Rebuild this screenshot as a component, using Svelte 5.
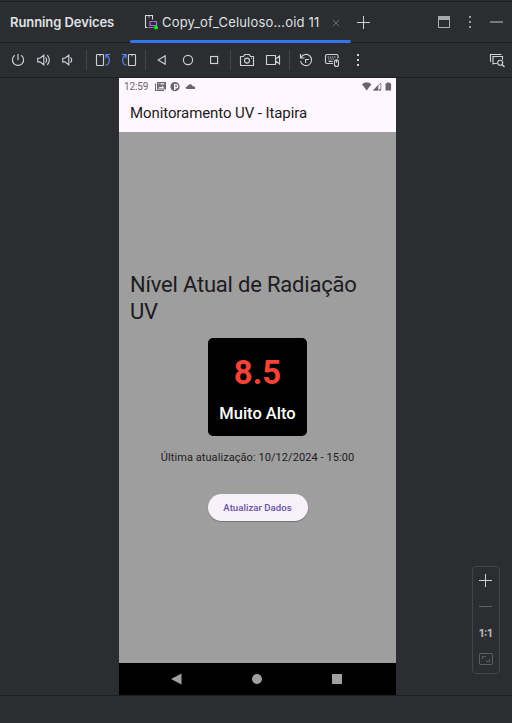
<script>
  const groups = [
    ['power', 'volumeUp', 'volumeDown'],
    ['rotateLeft', 'rotateRight'],
    ['back', 'home', 'overview'],
    ['camera', 'video'],
    ['reset', 'keyboard', 'more'],
  ];
</script>

{#snippet icon(name)}
  <svg class="icon" width="20" height="20" viewBox="0 0 20 20" fill="none" stroke="currentColor" stroke-width="1.15">
    {#if name === 'power'}
      <path d="M10 4v6.2M6.8 5.2A5.6 5.6 0 1 0 13.2 5.2" />
    {:else if name === 'volumeUp'}
      <path d="M3.7 8.2h2.1L9.8 5.2v9.6l-4-3H3.7zM11.5 7.4q2.3 2.6 0 5.2M13.3 5.2q4 4.8 0 9.6" />
    {:else if name === 'volumeDown'}
      <path d="M3.7 8.2h2.1L9.8 5.2v9.6l-4-3H3.7zM11.5 7.4q2.3 2.6 0 5.2" />
    {:else if name === 'rotateLeft'}
      <rect x="3.5" y="4.5" width="7" height="11" rx=".7" />
      <path d="M6.3 5.7h1.4" />
      <path class="blue" d="M12.5 15.3c4.8-1.4 5-7.5 1-10.3M17 4.5H12.9v4" />
    {:else if name === 'rotateRight'}
      <rect x="9.5" y="4.5" width="7" height="11" rx=".7" />
      <path d="M12.3 5.7h1.4" />
      <path class="blue" d="M7.5 15.3c-4.8-1.4-5-7.5-1-10.3M3 4.5H7.1v4" />
    {:else if name === 'back'}
      <path d="M13.2 5.8v8.4L6.2 10z" />
    {:else if name === 'home'}
      <circle cx="10" cy="10" r="4.6" />
    {:else if name === 'overview'}
      <rect x="6.6" y="6.5" width="7" height="7" />
    {:else if name === 'camera'}
      <path d="M3.5 6.5h3l1.2-2h4.6l1.2 2h3v9h-13z" stroke-linejoin="round" />
      <circle cx="10" cy="10.6" r="2.5" /><path d="M14 8.2h1.2" />
    {:else if name === 'video'}
      <path d="M3.5 5.5h9v9h-9zM12.5 9.2l4-3.3v8.2l-4-3.3" />
    {:else if name === 'reset'}
      <path d="M5 7.5a5.6 5.6 0 1 1-.5 3.5M4.5 4v4h4M9.6 13V9.5h3.6" />
    {:else if name === 'keyboard'}
      <path d="M11 13.5H5A1.5 1.5 0 0 1 3.5 12V6A1.5 1.5 0 0 1 5 4.5h9.5A1.5 1.5 0 0 1 16 6v2.5" />
      <path d="M5.7 7h8.2M6.3 9h6" stroke-dasharray="1.2 1" />
      <path d="M6.5 11.3h4.2M12.5 11.8a2 2 0 0 1 4 0v2.7a2 2 0 0 1-4 0zM14.5 10.5v2.2" />
    {:else if name === 'more'}
      <g fill="currentColor" stroke="none"><rect x="9" y="4" width="2" height="2" /><rect x="9" y="9" width="2" height="2" /><rect x="9" y="14" width="2" height="2" /></g>
    {:else if name === 'inspect'}
      <path d="M3.5 12V4.5h11M6 14.5V6.5h9.5v3.2M6 13.5h4" />
      <circle cx="13.2" cy="12.7" r="2.5" /><path d="M15 14.5l2.5 2.5" stroke-width="1.4" />
    {/if}
  </svg>
{/snippet}

<div class="ide">
  <header>
    <h1>Running Devices</h1>
    <div class="tab">
      <svg width="15" height="16" viewBox="0 0 15 16" fill="none">
        <path d="M3.5 13.5h-2v-12h7v4M4.3 3h1.4" stroke="#d5d7dc" stroke-width="1.1" />
        <path d="M6 7.5h6.5v4H6zM4.5 13.5h5" stroke="#a76ddb" stroke-width="1.2" />
        <circle cx="12" cy="13.5" r="2" fill="#00f51c" />
      </svg>
      <span>Copy_of_Celuloso...oid 11</span>
      <svg class="close" width="8" height="8" viewBox="0 0 8 8"><path d="M.7.7l6.6 6.6M7.3.7L.7 7.3" stroke="#6f7176" /></svg>
    </div>
    <svg class="add" width="13" height="13" viewBox="0 0 13 13"><path d="M6.5 0v13M0 6.5h13" stroke="#ced0d6" /></svg>
    <div class="window-actions">
      <svg width="12" height="12" viewBox="0 0 12 12"><path d="M.5.5h11v11H.5z" fill="none" stroke="#b0b1b3" /><path d="M0 0h12v4H0z" fill="#a7a8aa" /></svg>
      <svg width="2" height="12" viewBox="0 0 2 12" fill="#9fa1a5"><path d="M0 0h2v2H0zM0 5h2v2H0zM0 10h2v2H0z" /></svg>
      <svg width="13" height="2" viewBox="0 0 13 2"><path d="M0 0h13v2H0z" fill="#77797d" /></svg>
    </div>
  </header>

  <nav class="toolbar">
    {#each groups as group, i}
      {#if i > 0}<i class="separator"></i>{/if}
      {#each group as name}<span class="tool">{@render icon(name)}</span>{/each}
    {/each}
    <span class="tool inspect">{@render icon('inspect')}</span>
  </nav>

  <main>
    <section class="phone">
      <div class="appbar">
        <div class="status">
          <span class="time">12:59</span>
          <svg width="40" height="10" viewBox="0 0 40 10" fill="#69656c">
            <path d="M0 1.5h1V8h8v1H0z" /><path fill-rule="evenodd" d="M2 0h9v7.5H2zM3.3 1.3v1h1.2v-1zM5.5 1.3v1.2h3.7V1.3zM3 6.5h6.5L7.6 3.8 6 5.5l-1-1z" />
            <path fill-rule="evenodd" d="M20 0a4.6 4.6 0 1 0 .01 0zM19 2h2a2.2 2.2 0 1 1-.5 4.3V8H19z" /><circle cx="21" cy="4" r=".9" />
            <path d="M31.7 7a1.5 1.5 0 0 1-.2-2.6q1.2-.1 1.7-.8a2.2 2.2 0 0 1 4.2.5q3 0 3 2.9z" />
          </svg>
          <svg class="signals" width="30" height="9" viewBox="0 0 30 9" fill="#69656c">
            <path d="M0 2.3q4.7-4 9.4 0L4.7 8.5z" />
            <path d="M11.8 8l7-7v7z" fill="none" stroke="#77727a" stroke-width=".8" /><path d="M11 8.5L16.3 3v5.5zM17.5 7h1.5v1.5h-1.5z" />
            <path d="M23.5 1.3h1.5V.4h2.6v.9h1.5v7.2h-5.6z" />
          </svg>
        </div>
        <h2>Monitoramento UV - Itapira</h2>
      </div>
      <div class="content">
        <h3>Nível Atual de Radiação UV</h3>
        <div class="card"><strong>8.5</strong><span>Muito Alto</span></div>
        <p>Última atualização: 10/12/2024 - 15:00</p>
        <button>Atualizar Dados</button>
      </div>
      <div class="navbar">
        <svg width="11" height="12" viewBox="0 0 11 12"><path d="M10.5.5v11L0 6z" /></svg>
        <svg width="10" height="10" viewBox="0 0 10 10"><circle cx="5" cy="5" r="5" /></svg>
        <svg width="10" height="10" viewBox="0 0 10 10"><path d="M0 0h10v10H0z" /></svg>
      </div>
    </section>
    <aside>
      <svg width="13" height="13" viewBox="0 0 13 13"><path d="M6.5 0v13M0 6.5h13" stroke="#ced0d6" /></svg>
      <svg width="13" height="1" viewBox="0 0 13 1"><path d="M0 0h13v1H0z" fill="#5d5f64" /></svg>
      <b>1:1</b>
      <svg width="14" height="12" viewBox="0 0 14 12" fill="none" stroke="#5d5f64"><rect x=".5" y=".5" width="13" height="11" rx="1" /><path d="M3.5 6V3.5H7M10.5 6v2.5H7" /></svg>
    </aside>
  </main>
</div>

<style>
  :global(body) { margin: 0; background: #2b2d30; }
  .ide { box-sizing: border-box; width: 512px; height: 723px; padding-top: 1px; display: flex; flex-direction: column; overflow: hidden; background: #2b2d30; color: #ced0d6; font-family: Inter, sans-serif; }
  svg { display: block; flex: none; }
  h1, h2, h3, p { margin: 0; }
  header { box-sizing: border-box; height: 42px; border-top: 1px solid #1e1f22; border-bottom: 1px solid #1e1f22; display: flex; align-items: center; flex: none; }
  h1 { width: 120px; margin-left: 10px; font-size: 13px; font-weight: 600; letter-spacing: -.08px; color: #dfe1e5; white-space: nowrap; }
  .tab { position: relative; box-sizing: border-box; width: 221px; height: 40px; padding-left: 14px; display: flex; align-items: center; color: #dfe1e5; font-size: 13px; white-space: nowrap; }
  .tab::after { content: ''; position: absolute; left: 0; right: 0; bottom: -1px; height: 3px; border-radius: 2px; background: #3574f0; }
  .tab span { width: 159px; margin-left: 3px; letter-spacing: .18px; }
  .close { margin-left: 11px; margin-top: 2px; }
  .add { margin-left: 6px; }
  .window-actions { margin-left: auto; margin-right: 9px; display: flex; align-items: center; gap: 19px; }
  .toolbar { box-sizing: border-box; height: 35px; flex: none; padding-left: 5px; border-bottom: 1px solid #1e1f22; display: flex; align-items: center; }
  .tool { width: 25.8px; display: grid; place-items: center; }
  .separator { width: 1px; height: 20px; margin: 0 3.3px; background: #43454a; }
  .inspect { margin-left: auto; margin-right: 2px; }
  .blue { stroke: #548af7; }
  main { height: 617px; flex: none; display: grid; grid-template-columns: 119px 277px 76px 1fr; border-bottom: 1px solid #1e1f22; }
  .phone { grid-column: 2; display: flex; flex-direction: column; font-family: Roboto, sans-serif; color: #1d1b20; }
  .appbar { height: 54px; background: #fef7ff; }
  .status { height: 17px; padding: 0 4px 0 5px; display: flex; align-items: center; color: #69656c; }
  .time { width: 31px; font-size: 10px; line-height: 16px; letter-spacing: -.15px; }
  .signals { margin-left: auto; }
  h2 { padding: 8px 0 0 11px; font-size: 15px; line-height: 20px; font-weight: 400; letter-spacing: -.09px; }
  .content { height: 531px; display: flex; flex-direction: column; align-items: center; background: #9e9e9e; }
  h3 { box-sizing: border-box; width: 100%; height: 54px; margin-top: 139px; padding: 0 11px; font-size: 22px; line-height: 27px; font-weight: 400; letter-spacing: -.2px; }
  .card { box-sizing: border-box; width: 99px; height: 98px; margin-top: 13px; border-radius: 5px; background: #000; display: flex; flex-direction: column; align-items: center; padding-top: 15px; }
  .card strong { color: #f44336; font-size: 33px; line-height: 40px; font-weight: 700; letter-spacing: .1px; }
  .card span { margin-top: 11px; color: #fff; font-size: 16.5px; line-height: 20px; font-weight: 500; white-space: nowrap; }
  p { margin-top: 15px; font-size: 11px; line-height: 14px; letter-spacing: .07px; white-space: nowrap; }
  button { width: 100px; height: 27px; margin-top: 29px; padding: 0; border: 0; border-radius: 14px; background: #f7f2fa; box-shadow: 0 1px 1px #0004; color: #6750a4; font: 500 9.6px/27px Roboto, sans-serif; letter-spacing: .03px; }
  .navbar { height: 32px; background: #000; display: flex; align-items: center; justify-content: space-between; padding: 0 54px 0 52px; box-sizing: border-box; }
  .navbar svg { fill: #a0a0a0; }
  aside { box-sizing: border-box; grid-column: 4; width: 28px; height: 108px; margin-top: 488px; padding: 7px 1px 7px 0; border: 1px solid #43454a; border-radius: 4px; display: flex; flex-direction: column; align-items: center; }
  aside svg:nth-child(2) { margin-top: 19px; }
  aside b { margin-top: 19px; font-size: 11px; line-height: 14px; color: #b4b6ba; }
  aside svg:last-child { margin-top: 13px; }
</style>
